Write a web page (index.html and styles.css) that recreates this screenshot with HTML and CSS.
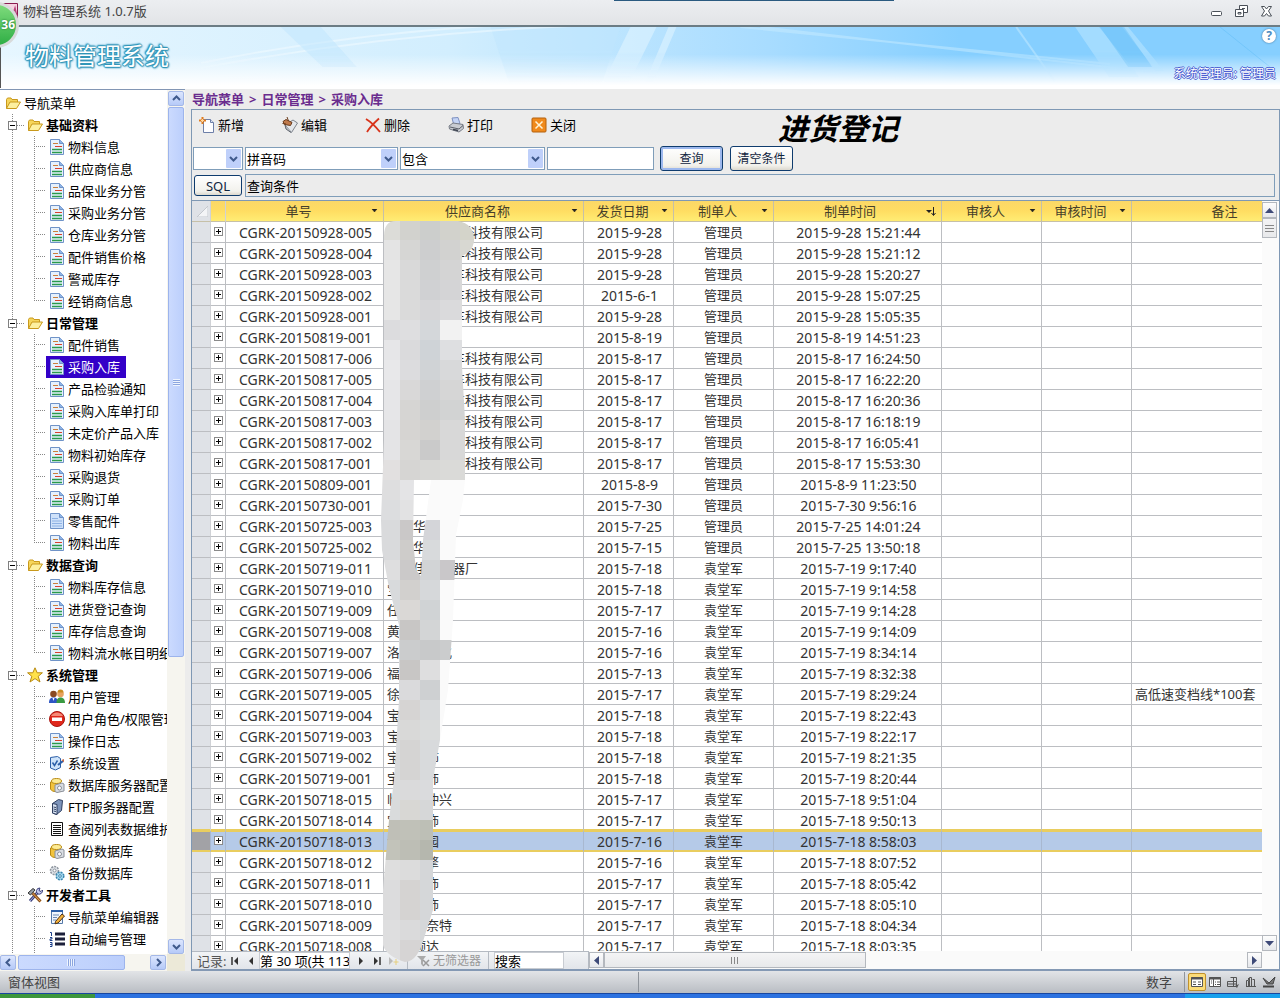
FILE: index.html
```html
<!DOCTYPE html>
<html lang="zh-CN">
<head>
<meta charset="utf-8">
<title>物料管理系统 1.0.7版</title>
<link rel="stylesheet" href="styles.css">
</head>
<body>
<svg class="sprite" aria-hidden="true">
  <symbol id="i-folder" viewBox="0 0 16 16"><path d="M1.500 13.500V4.500l1-1.500h3.500l1 1.500h5.500V7" fill="#f6d65c" stroke="#c9991c"/><path d="M1.500 13.500L5 7h10.500l-4 6.500z" fill="#fdf0a0" stroke="#c9991c"/></symbol>
  <symbol id="i-doc" viewBox="0 0 16 16"><path d="M1.500.5h9l4 4v11h-13z" fill="#e6f1fc" stroke="#6f93c8"/><path d="M10.500.5v4h4" fill="#8fb4e6" stroke="#6f93c8"/><path d="M4 4.500h5" stroke="#c9803c"/><path d="M6 7.500h7" stroke="#d8402c"/><path d="M3 10.500h10M3 13.500h10" stroke="#2a9a4c" stroke-width="1.300"/></symbol>
  <symbol id="i-docblue" viewBox="0 0 16 16"><path d="M1.500.5h9l4 4v11h-13z" fill="#cfe2fa" stroke="#6f93c8"/><path d="M10.500.5v4h4" fill="#8fb4e6" stroke="#6f93c8"/><path d="M3 5.500h6M3 8h10M3 10.500h10M3 13h10" stroke="#8eb2e4"/></symbol>
  <symbol id="i-star" viewBox="0 0 16 16"><path d="M8 .8l2.200 5h5.200l-4.200 3.500 1.800 5.700L8 11.600 3 15l1.800-5.700L.6 5.800h5.200z" fill="#ffe24a" stroke="#b98a12"/></symbol>
  <symbol id="i-users" viewBox="0 0 16 16"><circle cx="4.500" cy="5" r="3.300" fill="#8a4a22"/><path d="M0 14c0-4 1.500-5.500 4.500-5.500S9 10 9 14z" fill="#2e55c4"/><circle cx="11.500" cy="5" r="3.300" fill="#e7a35e"/><path d="M8.500 3.500a3 3 0 0 1 6 0z" fill="#c98c1f"/><path d="M7.500 14c0-4 1.500-5.500 4-5.500S16 10 16 14z" fill="#3a9a42"/><path d="M3.500 9l1 3 1-3z" fill="#fff"/></symbol>
  <symbol id="i-stop" viewBox="0 0 16 16"><circle cx="8" cy="8" r="7.500" fill="#e0281c" stroke="#a81410"/><path d="M2 5a7 7 0 0 1 12 0" fill="#f58a78"/><rect x="3" y="6.500" width="10" height="3.500" fill="#fff"/></symbol>
  <symbol id="i-setting" viewBox="0 0 16 16"><path d="M1.500 2.500l7-1 3 2v9l-5 2.500-5-2z" fill="#cfe4fa" stroke="#2c5fa8"/><path d="M3.500 7.500l2 3 3-5" fill="none" stroke="#2c5fa8" stroke-width="1.500"/><path d="M9 10l5-4" stroke="#2c5fa8" stroke-width="2"/><path d="M12.500 5l2.500-1v3.500z" fill="#c46a4a"/></symbol>
  <symbol id="i-db" viewBox="0 0 16 16"><path d="M1.500 5v7c1 2 3 2.500 5 2.500h5V4z" fill="#f2c33c" stroke="#b98a12"/><ellipse cx="7.500" cy="4" rx="5" ry="2.500" fill="#fdeb94" stroke="#b98a12"/><path d="M6 8l7-2 2 1v7l-7 1.500-2-1z" fill="#d9dde3" stroke="#8b9099"/><circle cx="10.500" cy="11" r="2" fill="#fff" stroke="#8b9099"/></symbol>
  <symbol id="i-server" viewBox="0 0 16 16"><path d="M3.500 4.500l6-4 4 1-1 10-5 4-4-1.500z" fill="#7d94bb" stroke="#2f3f60"/><path d="M3.500 4.500l4.500 1v10l-4.500-1.500z" fill="#dbe6f6" stroke="#2f3f60"/><path d="M4.500 8l2.500.5M4.500 10l2.500.5M4.500 12l2.500.5" stroke="#2f3f60"/></symbol>
  <symbol id="i-list" viewBox="0 0 16 16"><path d="M2.500 1.500h11v13h-11z" fill="#fff" stroke="#111"/><path d="M4 4.500h8M4 6.500h8M4 8.500h8M4 10.500h8M4 12.500h8" stroke="#111"/></symbol>
  <symbol id="i-gears" viewBox="0 0 16 16"><circle cx="5.500" cy="5.500" r="4" fill="#dfe3e8" stroke="#8e959e" stroke-dasharray="2 1" stroke-width="1.500"/><circle cx="5.500" cy="5.500" r="1.500" fill="#fff" stroke="#8e959e"/><circle cx="11" cy="11" r="3.800" fill="#a6d8f0" stroke="#3a86ae" stroke-dasharray="2 1" stroke-width="1.500"/><circle cx="11" cy="11" r="1.300" fill="#fff" stroke="#3a86ae"/></symbol>
  <symbol id="i-tools" viewBox="0 0 16 16"><path d="M3 14L11 5" stroke="#3b3f7a" stroke-width="3"/><path d="M3 14L11 5" stroke="#a9b4e6"/><path d="M10 6a3 3 0 0 1 1-4.500l2-.5-1 2.500 2 1 1.500-1.500A3.500 3.500 0 0 1 11 7z" fill="#c7cdf2" stroke="#3b3f7a"/><path d="M13.500 14.500L5.500 6" stroke="#8a4f1c" stroke-width="3"/><path d="M13.500 14.500L5.500 6" stroke="#e6a65a"/><path d="M1 6l5-4.500 2 1.500-4.500 5z" fill="#9aa0a8" stroke="#333"/></symbol>
  <symbol id="i-note" viewBox="0 0 16 16"><path d="M2.500 1.500h11v13h-11z" fill="#f0f6fd" stroke="#5478a8"/><path d="M2 2h12" stroke="#2c5fa8" stroke-width="2"/><path d="M4 6h6M4 8.500h4M4 11h3" stroke="#6b89b5"/><path d="M6.500 12.500L13 5l2.500 2L9 14l-3 .8z" fill="#f4b23c" stroke="#503010"/></symbol>
  <symbol id="i-numlist" viewBox="0 0 16 16"><path d="M6 3h10M6 8h10M6 13h10" stroke="#1b1f3a" stroke-width="3"/><path d="M1 1.500h1.500V5M1 6.500h2v1.500H1v1.500h2.500M1 11.500h2v4H1m0-2h2" fill="none" stroke="#1b3f8a"/></symbol>
  <symbol id="i-new" viewBox="0 0 16 16"><path d="M4.500 2.500h7l3 3v10h-10z" fill="#fdfdff" stroke="#6d7fa8"/><path d="M11.500 2.500v3h3" fill="#dfe6f5" stroke="#6d7fa8"/><path d="M3.500 0v7M0 3.500h7" stroke="#e07a1c" stroke-width="2"/><path d="M3.500 2v3M2 3.500h3" stroke="#ffd9a0"/></symbol>
  <symbol id="i-edit" viewBox="0 0 16 16"><path d="M3 8l8-5 4.500 3-6 9.500z" fill="#e3e6ea" stroke="#7d838c"/><path d="M3 8l1 4 5 3.500" fill="#b9bec6" stroke="#60656e"/><path d="M1 4.500l3-2 6 3-1.500 3-6-1z" fill="#c07a4c" stroke="#6b3d1e"/><path d="M5 0l1.500 4M.5 6.500l3.500.5" stroke="#6b3d1e"/></symbol>
  <symbol id="i-del" viewBox="0 0 16 16"><path d="M1 2c5 3 10 8 14 13M14 1.500C9 6 5 10 2 15" fill="none" stroke="#d8331a" stroke-width="1.800"/></symbol>
  <symbol id="i-print" viewBox="0 0 16 16"><path d="M4 1l6-.5 2 6-6 2z" fill="#c4d4f6" stroke="#7e90c0"/><path d="M1 9l4-3 10 1.500.5 4L11 15 1.500 12z" fill="#c9ccd2" stroke="#777c86"/><path d="M2 10l9 2 4-3.500" fill="none" stroke="#5a5f69"/><path d="M5 12.500l5 1" stroke="#3f4450" stroke-width="1.500"/></symbol>
  <symbol id="i-close" viewBox="0 0 16 16"><rect x="1" y="1" width="14" height="14" rx="1" fill="#f08a1c" stroke="#b4600c"/><path d="M4.500 4.500l7 7M11.500 4.500l-7 7" stroke="#fff4d8" stroke-width="1.500"/></symbol>
  <symbol id="i-up" viewBox="0 0 9 9"><path d="M1 6l3.500-3.500L8 6" fill="none" stroke="#3f5a8c" stroke-width="2"/></symbol>
  <symbol id="i-down" viewBox="0 0 9 9"><path d="M1 3l3.500 3.500L8 3" fill="none" stroke="#3f5a8c" stroke-width="2"/></symbol>
  <symbol id="i-left" viewBox="0 0 9 9"><path d="M6 1L2.500 4.500 6 8" fill="none" stroke="#3f5a8c" stroke-width="2"/></symbol>
  <symbol id="i-right" viewBox="0 0 9 9"><path d="M3 1l3.500 3.500L3 8" fill="none" stroke="#3f5a8c" stroke-width="2"/></symbol>
</svg>

<div class="app">
  <header class="titlebar">
    <span class="app-name">物料管理系统 1.0.7版</span>
    <span class="top-strip"></span>
    <div class="window-buttons">
      <button type="button" aria-label="最小化"><svg width="13" height="13"><rect x="1.500" y="6.500" width="10" height="4" rx="1" fill="#fff" stroke="#4a5058"/></svg></button>
      <button type="button" aria-label="还原"><svg width="13" height="13"><path d="M4.500 .5h8v7h-8z" fill="#fff" stroke="#4a5058"/><path d="M7 3.500h3" stroke="#4a5058"/><path d="M.5 4.500h8v7h-8z" fill="#fff" stroke="#4a5058"/><path d="M3 7.500h3v1.500h-3z" fill="none" stroke="#4a5058"/></svg></button>
      <button type="button" aria-label="关闭"><svg width="13" height="13"><path d="M1.500 1.500h3l2 2.500 2-2.500h3L8.500 6l3 5h-3l-2-2.500-2 2.500h-3l3-5z" fill="#fff" stroke="#4a5058"/></svg></button>
    </div>
  </header>
  <svg class="app-icon" width="20" height="20" aria-hidden="true"><path d="M.5.5h17v17H.5z" fill="#f6d3e2" stroke="#8a1c50"/><path d="M12 14l3-9 2 9" fill="none" stroke="#b8477c" stroke-width="1.500"/></svg>
  <div class="badge">36</div>

  <section class="banner">
    <svg class="streaks" viewBox="0 0 1280 61" preserveAspectRatio="none" aria-hidden="true">
      <path d="M490 0h130l-20 61h-90z" fill="#bfe6fd" opacity=".5"/>
      <path d="M630 0h26l-30 61h-26zM668 0h8l-26 61h-8z" fill="#e8f7ff" opacity=".5"/>
      <path d="M200 36Q380 0 560 -4M200 41Q400 4 600 -2" fill="none" stroke="#f4fbff" stroke-width="2" opacity=".5"/>
      <path d="M740 0L1110 37M760 0L1160 46" stroke="#c8ecff" stroke-width="2" opacity=".5"/>
      <path d="M1016 0L1055 55" stroke="#c8ecff" stroke-width="2" opacity=".5"/>
      <path d="M1075 0h24l40 50h-30zM1122 0h6l36 44h-8z" fill="#b8e4ff" opacity=".6"/>
      <path d="M1100 0h24l28 40h-24z" fill="#6bc2f8" opacity=".5"/>
      <path d="M1220 0L1270 40" stroke="#6bc2f8" opacity=".7"/>
      <path d="M280 0h40l36 40h-34z" fill="#bfe6fd" opacity=".5"/>
    </svg>
    <h1>物料管理系统</h1>
    <div class="banner-side">
      <button type="button" class="help" aria-label="帮助">?</button>
      <span class="who">系统管理员: 管理员</span>
    </div>
  </section>

  <div class="work">
    <aside class="sidebar">
      <ul class="tree" id="tree"></ul>
      <div class="xp-v">
        <button type="button" aria-label="向上"><svg width="9" height="9"><use href="#i-up"/></svg></button>
        <span class="thumb"><i></i></span>
        <button type="button" aria-label="向下"><svg width="9" height="9"><use href="#i-down"/></svg></button>
      </div>
      <div class="xp-h">
        <button type="button" aria-label="向左"><svg width="9" height="9"><use href="#i-left"/></svg></button>
        <span class="thumb"><i></i></span>
        <button type="button" aria-label="向右"><svg width="9" height="9"><use href="#i-right"/></svg></button>
      </div>
      <div class="corner"></div>
    </aside>

    <main class="content">
      <nav class="crumbs"><span>导航菜单</span><span>&gt;</span><span>日常管理</span><span>&gt;</span><span>采购入库</span></nav>
      <div class="form">
        <div class="toolbar">
          <button type="button"><svg width="16" height="16"><use href="#i-new"/></svg>新增</button>
          <button type="button"><svg width="16" height="16"><use href="#i-edit"/></svg>编辑</button>
          <button type="button"><svg width="16" height="16"><use href="#i-del"/></svg>删除</button>
          <button type="button"><svg width="16" height="16"><use href="#i-print"/></svg>打印</button>
          <button type="button"><svg width="16" height="16"><use href="#i-close"/></svg>关闭</button>
          <h2>进货登记</h2>
        </div>
        <div class="filters">
          <select class="s-logic" aria-label="逻辑"><option></option></select>
          <select class="s-field" aria-label="字段"><option>拼音码</option></select>
          <select class="s-op" aria-label="条件"><option>包含</option></select>
          <input class="s-value" type="text" aria-label="值">
          <button type="button" class="btn default">查询</button>
          <button type="button" class="btn">清空条件</button>
        </div>
        <div class="sqlrow">
          <button type="button" class="btn sql">SQL</button>
          <input type="text" value="查询条件" aria-label="查询条件">
        </div>
        <div class="grid">
          <div class="table-wrap">
            <table>
              <colgroup><col class="c-sel"><col class="c-exp"><col class="c-no"><col class="c-sup"><col class="c-date"><col class="c-by"><col class="c-time"><col class="c-aud"><col class="c-audt"><col class="c-memo"></colgroup>
              <thead><tr id="head"></tr></thead>
              <tbody id="rows"></tbody>
            </table>
          </div>
          <div class="ac-v">
            <button type="button" aria-label="上"><svg width="9" height="5"><path d="M0 5L4.500 0 9 5z" fill="#3e4a78"/></svg></button>
            <span class="thumb"><i></i></span>
            <button type="button" aria-label="下"><svg width="9" height="5"><path d="M0 0h9L4.500 5z" fill="#3e4a78"/></svg></button>
          </div>
          <div class="foot">
            <div class="recnav">
              <span class="rec-label">记录:</span>
              <button type="button" aria-label="第一条"><svg width="8" height="8"><path d="M1 0v8" stroke="#333" stroke-width="1.500"/><path d="M7 0v8L3 4z" fill="#333"/></svg></button>
              <button type="button" aria-label="上一条"><svg width="8" height="8"><path d="M6 0v8L2 4z" fill="#333"/></svg></button>
              <input class="rec-pos" type="text" value="第 30 项(共 113" aria-label="当前记录">
              <button type="button" aria-label="下一条"><svg width="8" height="8"><path d="M2 0v8l4-4z" fill="#333"/></svg></button>
              <button type="button" aria-label="最后一条"><svg width="8" height="8"><path d="M1 0v8l4-4z" fill="#333"/><path d="M7 0v8" stroke="#333" stroke-width="1.500"/></svg></button>
              <button type="button" aria-label="新记录"><svg width="10" height="8"><path d="M0 0v8l4-4z" fill="#bbb"/><path d="M7 2v6M4.500 5h5" stroke="#e6cf7c"/></svg></button>
              <button type="button" class="nofilter" disabled><svg width="14" height="12"><path d="M1 1h9L7 5v6L5 9V5z" fill="#aaa"/><path d="M7 5l6 6M13 5l-6 6" stroke="#999" stroke-width="1.500"/></svg>无筛选器</button>
              <input class="rec-search" type="text" value="搜索" aria-label="搜索">
            </div>
            <div class="ac-h">
              <button type="button" aria-label="左"><svg width="5" height="9"><path d="M5 0v9L0 4.500z" fill="#3e4a78"/></svg></button>
              <span class="thumb"><i></i></span>
              <button type="button" aria-label="右"><svg width="5" height="9"><path d="M0 0v9l5-4.500z" fill="#3e4a78"/></svg></button>
            </div>
          </div>
          <svg class="mosaic" id="mosaic" width="100" height="745" viewBox="380 220 100 745" aria-hidden="true">
            <clipPath id="blob"><path clip-rule="evenodd" d="M384 236Q384 221 396 221H458Q475 224 474 242Q472 252 462 256V366L465 420V480L463 500L456 535L453 620L448 690L440 740L433 780V910L425 935Q418 962 405 962Q386 956 383 945V890L389 820L394 780L399 700V625L389 588L382 550L381 520L384 440ZM414 480L413 540L416 570L421 576L423 540L427 510L431 480Z"/></clipPath>
            <g id="blocks" clip-path="url(#blob)"></g>
          </svg>
        </div>
      </div>
    </main>
  </div>

  <footer class="statusbar">
    <span class="view-name">窗体视图</span>
    <span class="num-lock">数字</span>
    <div class="views">
      <button type="button" class="on" aria-label="窗体视图"><svg width="14" height="14"><path d="M1.500 2.500h11v9h-11z" fill="#fff" stroke="#555"/><path d="M1 3.500h12" stroke="#555" stroke-width="2"/><path d="M3 7h3M3 9.500h3M8 7h3M8 9.500h3" stroke="#555"/></svg></button>
      <button type="button" aria-label="数据表视图"><svg width="14" height="14"><path d="M1.500 2.500h11v9h-11zM5.500 2v10" fill="#fff" stroke="#555"/><path d="M1 3.500h12" stroke="#555" stroke-width="2"/><path d="M3 6h1M3 8h1M7 7h1M7 9.500h1M9 7h3M9 9.500h3" stroke="#555"/></svg></button>
      <button type="button" aria-label="透视表视图"><svg width="14" height="14"><path d="M1.500 6.500h9v5h-9zM4.500 2.500h6v9M7.500 2v10M1.500 9h9" fill="none" stroke="#555"/><path d="M9 11l4-2-2 4z" fill="#555"/></svg></button>
      <button type="button" aria-label="透视图视图"><svg width="14" height="14"><path d="M2.500 5.500h2v6h-2zM5.500 2.500h2v9h-2zM8.500 4.500h2v7M2 11.500h10M4.500 3v2" fill="none" stroke="#555"/></svg></button>
      <button type="button" aria-label="设计视图"><svg width="14" height="14"><path d="M1 3l4 6h6L13 2 7 8z" fill="#777" stroke="#444"/><path d="M1 11.500h11" stroke="#444" stroke-width="2"/></svg></button>
    </div>
  </footer>
  <div class="taskbar"><span class="start"></span><span class="tasks"></span><span class="tray"></span></div>
</div>
<script src="app.js"></script>
</body>
</html>
```
FILE: styles.css
```css
* { box-sizing: border-box; }
body {
  margin: 0;
  font: 13px/20px "Noto Sans", "Noto Sans CJK SC", sans-serif;
  color: #111;
  background: #ececec;
}
button, input, select { font: inherit; color: inherit; margin: 0; padding: 0; }
button { background: none; border: 0; }
h1, h2, ul { margin: 0; padding: 0; }
svg { display: block; flex: none; }
.sprite { position: absolute; width: 0; height: 0; }
.app { position: relative; display: flex; flex-direction: column; height: 100vh; overflow: hidden; }

/* title bar */
.titlebar {
  flex: none; display: flex; justify-content: space-between; height: 27px; padding: 0 7px 0 23px;
  background: linear-gradient(#eceef1, #e2e4e7);
  border-bottom: 2px solid #6c7c84;
  color: #444; line-height: 22px;
}
.top-strip { width: 280px; height: 1px; margin-left: 152px; background: #2a5a80; }
.window-buttons { display: flex; gap: 12px; align-items: center; height: 22px; }
.app-icon { position: absolute; left: 0; top: 3px; }
.badge {
  position: absolute; z-index: 2; left: -27px; top: 2px; width: 46px; height: 46px;
  border: 3px solid #d8dadb; border-radius: 50%;
  background: linear-gradient(#7edb7c, #2fae45);
  color: #fff; font-weight: bold; font-size: 12px; line-height: 40px; text-align: right; padding-right: 1px;
  text-shadow: 0 0 2px #186a28;
}

/* banner */
.banner {
  position: relative; flex: none; display: flex; justify-content: space-between; height: 61px; padding-left: 24px;
  background: linear-gradient(transparent 45%, #fff 96%), linear-gradient(90deg, #e6f6ff, #d2eefe 35%, #a8dcff 60%, #86cfff 75%);
  border-left: 1px solid #555;
}
.streaks { position: absolute; inset: 0; width: 100%; height: 100%; -webkit-mask-image: linear-gradient(#000 40%, transparent 90%); mask-image: linear-gradient(#000 40%, transparent 90%); }
.banner h1 {
  position: relative; font-size: 24px; font-weight: normal; line-height: 58px; color: #fff;
  text-shadow: 1px 0 1px #2f94b8, -1px 0 1px #2f94b8, 0 1px 1px #2f94b8, 0 -1px 1px #2f94b8, 1px 1px 2px #2f94b8, -1px -1px 2px #2f94b8;
}
.banner-side { position: relative; display: flex; flex-direction: column; align-items: flex-end; justify-content: space-between; padding: 2px 4px 4px 0; }
.help { width: 14px; height: 14px; border-radius: 50%; background: #fff; box-shadow: 0 0 2px #35658c; color: #4d8bc0; font-weight: bold; font-size: 12px; line-height: 14px; }
.who { font-size: 12px; color: #fff; text-shadow: 1px 0 #4a5cd0, -1px 0 #4a5cd0, 0 1px #4a5cd0, 0 -1px #4a5cd0; }

/* work area */
.work { flex: 1; min-height: 0; display: flex; border-top: 1px solid #fff; }
.sidebar {
  flex: none; width: 185px; display: grid; grid-template: minmax(0, 1fr) 17px / minmax(0, 1fr) 18px;
  background: #fff; border-top: 1px solid #8296b4;
}
.tree { list-style: none; padding-top: 2px; overflow: hidden; color: #000; white-space: nowrap; }
.tree li {
  display: flex; align-items: center; height: 22px;
  background: linear-gradient(#888 50%, transparent 50%) 12px 0 / 1px 2px repeat-y;
}
.tree li > * { flex: none; }
.tree .root { background: none; padding-left: 5px; }
.tree a { display: flex; align-items: center; gap: 3px; height: 22px; color: inherit; text-decoration: none; }
.tree .group a { font-weight: bold; padding-left: 2px; }
.toggle { width: 9px; height: 9px; margin-left: 8px; border: 1px solid #808080; background: linear-gradient(#000, #000) center / 5px 1px no-repeat #fff; }
.dash { width: 8px; height: 1px; background: linear-gradient(90deg, #888 50%, transparent 50%) 0 0 / 2px 1px; }
.branch {
  width: 12px; height: 22px; margin-left: 34px;
  background: linear-gradient(#888 50%, transparent 50%) 0 0 / 1px 2px repeat-y, linear-gradient(90deg, #888 50%, transparent 50%) 0 10px / 2px 1px repeat-x;
}
.branch.last { background: linear-gradient(90deg, #888 50%, transparent 50%) 0 10px / 2px 1px repeat-x; }
.branch.last::before { content: ""; display: block; width: 1px; height: 10px; background: linear-gradient(#888 50%, transparent 50%) 0 0 / 1px 2px; }
.item a { padding: 0 6px 0 3px; }
.item a.current { background: #3300c8; color: #fff; }

.xp-v, .xp-h { display: flex; background: #f6f5ef; gap: 1px; }
.xp-v { flex-direction: column; padding: 1px 1px 0; }
.xp-h { padding: 1px 1px 1px 0; justify-content: space-between; }
.xp-v button, .xp-h button { display: grid; place-items: center; width: 16px; height: 15px; flex: none; background: linear-gradient(#dce6fe, #b6caf8); border: 1px solid #a4b8e8; border-radius: 2px; }
.xp-v .thumb, .xp-h .thumb { display: grid; place-items: center; border: 1px solid #9db4ec; border-radius: 2px; background: linear-gradient(90deg, #cbdafe, #bccffc); }
.xp-v .thumb { height: 550px; }
.xp-v button:last-child { margin-top: auto; }
.xp-h .thumb { width: 107px; margin-right: 24px; }
.xp-v i { width: 7px; height: 7px; background: repeating-linear-gradient(#eef4fe 0 1px, #8ca6e0 1px 2px); }
.xp-h i { width: 8px; height: 7px; background: repeating-linear-gradient(90deg, #eef4fe 0 1px, #8ca6e0 1px 2px); }
.corner { background: #ece9d8; }

.content { flex: 1; min-width: 0; display: flex; flex-direction: column; padding-left: 6px; }
.crumbs { flex: none; display: flex; gap: 5px; height: 20px; padding-left: 1px; color: #6a2c8e; font-weight: bold; }
.form { flex: 1; min-height: 0; display: flex; flex-direction: column; border: 1px solid #7f98b4; border-bottom: 2px solid #8499b4; }
.toolbar { flex: none; display: flex; height: 36px; padding-left: 7px; color: #000; }
.toolbar button { display: flex; align-items: center; gap: 3px; width: 83px; height: 30px; }
.toolbar h2 { margin-left: 164px; font: italic bold 30px/34px "Noto Sans CJK SC", sans-serif; }
.filters { flex: none; display: flex; align-items: center; gap: 2px; height: 25px; padding-left: 1px; }
.filters select, .s-value { height: 23px; border: 1px solid #7f9db9; border-radius: 0; background: #fff; color: #000; padding-left: 1px; }
.filters select {
  appearance: none;
  background: url("data:image/svg+xml,%3Csvg xmlns='http://www.w3.org/2000/svg' width='15' height='19'%3E%3Crect width='15' height='19' rx='1' fill='%23bfd0fa'/%3E%3Cpath d='M4 8l3.500 3.500L11 8' fill='none' stroke='%233f5a8c' stroke-width='2'/%3E%3C/svg%3E") right 1px center no-repeat #fff;
}
.s-logic { width: 50px; }
.s-field { width: 153px; }
.s-op { width: 145px; }
.s-value { width: 107px; margin-right: 4px; }
.btn {
  width: 63px; height: 25px; font-size: 12px; color: #10243e;
  border: 1px solid #0f3c6e; border-radius: 3px; background: linear-gradient(#fff, #f2f1ec 80%, #dcd8ce);
}
.btn + .btn { margin-left: 5px; }
.btn.default { box-shadow: inset 0 0 0 2px #9db8ee; }
.sqlrow { flex: none; display: flex; align-items: center; gap: 3px; height: 29px; padding: 0 4px 0 2px; }
.btn.sql { width: 48px; height: 21px; line-height: 18px; font-size: 13px; }
.sqlrow input { flex: 1; height: 23px; border: 1px solid #7f9db9; background: #ececec; color: #000; padding-left: 1px; }

/* data sheet */
.grid {
  position: relative; flex: 1; min-height: 0;
  display: grid; grid-template: minmax(0, 1fr) 18px / minmax(0, 1fr) 17px;
  border-top: 1px solid #7f98b4; background: #fafafa;
}
.table-wrap { overflow: hidden; background: #fff; }
table { table-layout: fixed; width: 1131px; border-spacing: 0; color: #333; }
.c-sel { width: 19px; }
.c-exp { width: 15px; }
.c-no { width: 158px; }
.c-sup { width: 200px; }
.c-date, .c-audt { width: 90px; }
.c-by, .c-aud { width: 100px; }
.c-time { width: 168px; }
.c-memo { width: 191px; }
th, td { height: 21px; padding: 0; border: solid #bcbec2; border-width: 0 1px 1px 0; text-align: center; white-space: nowrap; line-height: 19px; overflow: hidden; }
th { font-weight: normal; background: linear-gradient(#fbd867, #ffdd62 50%, #ffec74); color: #463f2a; border-color: #c6c0a8; }
th .cap { display: flex; align-items: center; padding-right: 5px; }
th .cap span { flex: 1; }
th:first-child { background: #dfe2e7; }
th:first-child svg { margin-left: 4px; }
th:nth-child(-n+2), td:first-child { border-right-color: #d0d2d6; }
td:first-child { background: #dfe2e7; }
td.code { font-size: 14px; padding-left: 2px; }
td.text { text-align: left; padding-left: 3px; }
.plus { display: block; width: 9px; height: 9px; margin: 0 0 2px 3px; border: 1px solid #8a8a8a; background: linear-gradient(#000, #000) center / 5px 1px no-repeat, linear-gradient(#000, #000) center / 1px 5px no-repeat, #fff; }
tr.sel td { background: #b5cae8; border-bottom-color: #e9cd5f; border-right-color: #a8b8d0; box-shadow: inset 0 1px #e9cd5f, inset 0 -1px #e9cd5f; }
tr:has(+ .sel) td { border-bottom-color: #e9cd5f; box-shadow: inset 0 -1px #e9cd5f; }
tr.sel td:first-child { background: #a2a2a6; }

.ac-v { display: flex; flex-direction: column; padding: 1px 1px 0 0; background: #fbfbfb; }
.ac-v button, .ac-h button { display: grid; place-items: center; width: 15px; height: 16px; flex: none; background: linear-gradient(#fdfdfd, #e6e8ec); border: 1px solid #b4b8be; }
.ac-v .thumb, .ac-h .thumb { display: grid; place-items: center; background: linear-gradient(#f4f4f5, #e8e9eb); border: 1px solid #b4b8be; }
.ac-v button, .ac-v .thumb { width: 15px; }
.ac-v .thumb { height: 20px; }
.ac-v button:last-child { margin-top: auto; }
.ac-v i { width: 9px; height: 7px; background: repeating-linear-gradient(#888 0 1px, transparent 1px 3px); }
.foot { display: flex; grid-column: 1 / 3; min-width: 0; }
.recnav { flex: none; display: flex; align-items: center; width: 397px; padding-left: 5px; border: solid #b4bac2; border-width: 1px 1px 0 0; background: linear-gradient(#f2f4f6, #e2e5ea); color: #555; }
.recnav button { flex: none; display: flex; align-items: center; }
.rec-label { width: 34px; }
.recnav input { height: 17px; border: 1px solid #c8ccd2; background: #fff; color: #000; line-height: 15px; }
.rec-label + button { margin-right: 8px; }
.rec-pos { width: 91px; margin: 0 7px 0 4px; }
.rec-pos + button + button { margin: 0 8px; }
.recnav .nofilter { gap: 3px; height: 17px; margin-left: 8px; padding: 0 7px 0 8px; border: solid #b4bac2; border-width: 0 1px; color: #999; font-size: 12px; }
.rec-search { width: 70px; margin-left: 5px; }
.ac-h { flex: 1; display: flex; padding: 1px 17px 1px 0; }
.ac-h .thumb { width: 262px; }
.ac-h button:last-child { margin-left: auto; }
.ac-h i { width: 8px; height: 7px; background: repeating-linear-gradient(90deg, #888 0 1px, transparent 1px 3px); }
.mosaic { position: absolute; left: 188px; top: 19px; }

/* status bar */
.statusbar { flex: none; display: flex; align-items: center; height: 22px; padding: 0 2px 0 8px; color: #444; background: linear-gradient(#e2e4e7, #b9bdc3); }
.view-name { flex: none; width: 50%; margin-right: auto; background: linear-gradient(90deg, transparent 630px, #8f949b 630px 631px, transparent 631px); }
.num-lock { padding-right: 12px; margin-right: 3px; border-right: 1px solid #8f949b; }
.views { display: flex; }
.views button { width: 18px; height: 18px; display: grid; place-items: center; }
.views .on { background: #fbdc78; border: 1px solid #c0912c; border-radius: 2px; }
.taskbar { flex: none; display: flex; height: 5px; border-top: 1px solid #1846a0; }
.start { width: 95px; background: #3d963c; }
.tasks { flex: 1; background: #2c72e0; }
.tray { width: 95px; background: #18a0ec; }
```
FILE: app.js
```js
const icon = (name, size = 16) => `<svg width="${size}" height="${size}"><use href="#i-${name}"/></svg>`;

const tree = [
  ['基础资料', 'folder', ['物料信息', '供应商信息', '品保业务分管', '采购业务分管', '仓库业务分管', '配件销售价格', '警戒库存', '经销商信息']],
  ['日常管理', 'folder', ['配件销售', '采购入库', '产品检验通知', '采购入库单打印', '未定价产品入库', '物料初始库存', '采购退货', '采购订单', ['零售配件', 'docblue'], '物料出库']],
  ['数据查询', 'folder', ['物料库存信息', '进货登记查询', '库存信息查询', '物料流水帐目明细']],
  ['系统管理', 'star', [['用户管理', 'users'], ['用户角色/权限管理', 'stop'], '操作日志', ['系统设置', 'setting'], ['数据库服务器配置', 'db'], ['FTP服务器配置', 'server'], ['查阅列表数据维护', 'list'], ['备份数据库', 'db'], ['备份数据库', 'gears']]],
  ['开发者工具', 'tools', [['导航菜单编辑器', 'note'], ['自动编号管理', 'numlist'], ['', 'db']]]
];

let html = `<li class="root"><a href="#">${icon('folder')}<span>导航菜单</span></a></li>`;
for (const [name, groupIcon, children] of tree) {
  html += `<li class="group"><button type="button" class="toggle" aria-label="折叠${name}"></button><span class="dash"></span><a href="#">${icon(groupIcon)}${name}</a></li>`;
  children.forEach((child, i) => {
    const [label, pic] = Array.isArray(child) ? child : [child, 'doc'];
    const last = i === children.length - 1 ? ' last' : '';
    const current = label === '采购入库' ? ' class="current"' : '';
    html += `<li class="item"><span class="branch${last}"></span><a href="#"${current}>${icon(pic)}<span>${label}</span></a></li>`;
  });
}
document.getElementById('tree').innerHTML = html;

const arrow = '<svg width="7" height="4"><path d="M1 0h5L3.500 3z" fill="#222" stroke="#222" stroke-width=".5"/></svg>';
const sorted = '<svg width="10" height="9"><path d="M0 3h6L3 6z" fill="#222"/><path d="M7.500 0v8M5.500 6l2 2.500 2-2.500" fill="none" stroke="#222"/></svg>';
const heads = ['单号', '供应商名称', '发货日期', '制单人', '制单时间', '审核人', '审核时间', '备注'];
document.getElementById('head').innerHTML =
  '<th><svg width="12" height="12"><path d="M12 1v11H1z" fill="#f4f5f7" stroke="#c4c8ce"/></svg></th><th></th>' +
  heads.map(h => `<th><div class="cap"><span>${h}</span>${h === '备注' ? '' : h === '制单时间' ? sorted : arrow}</div></th>`).join('');

const co = '　　　　　车科技有限公司';
const admin = '管理员', yuan = '袁堂军';
const rows = [
  ['0928-005', co, '9-28', admin, '9-28 15:21:44'],
  ['0928-004', co, '9-28', admin, '9-28 15:21:12'],
  ['0928-003', co, '9-28', admin, '9-28 15:20:27'],
  ['0928-002', co, '6-1', admin, '9-28 15:07:25'],
  ['0928-001', co, '9-28', admin, '9-28 15:05:35'],
  ['0819-001', '', '8-19', admin, '8-19 14:51:23'],
  ['0817-006', co, '8-17', admin, '8-17 16:24:50'],
  ['0817-005', co, '8-17', admin, '8-17 16:22:20'],
  ['0817-004', co, '8-17', admin, '8-17 16:20:36'],
  ['0817-003', co, '8-17', admin, '8-17 16:18:19'],
  ['0817-002', co, '8-17', admin, '8-17 16:05:41'],
  ['0817-001', co, '8-17', admin, '8-17 15:53:30'],
  ['0809-001', '', '8-9', admin, '8-9 11:23:50'],
  ['0730-001', '', '7-30', admin, '7-30 9:56:16'],
  ['0725-003', '　　华', '7-25', admin, '7-25 14:01:24'],
  ['0725-002', '　　华', '7-15', admin, '7-25 13:50:18'],
  ['0719-011', '　　佳　　器厂', '7-18', yuan, '7-19 9:17:40'],
  ['0719-010', '宝', '7-18', yuan, '7-19 9:14:58'],
  ['0719-009', '任', '7-17', yuan, '7-19 9:14:28'],
  ['0719-008', '黄', '7-16', yuan, '7-19 9:14:09'],
  ['0719-007', '洛　　　化', '7-16', yuan, '7-19 8:34:14'],
  ['0719-006', '福', '7-13', yuan, '7-19 8:32:38'],
  ['0719-005', '徐', '7-17', yuan, '7-19 8:29:24', '高低速变档线*100套'],
  ['0719-004', '宝', '7-18', yuan, '7-19 8:22:43'],
  ['0719-003', '宝', '7-18', yuan, '7-19 8:22:17'],
  ['0719-002', '宝　　饰', '7-18', yuan, '7-19 8:21:35'],
  ['0719-001', '宝　　饰', '7-18', yuan, '7-19 8:20:44'],
  ['0718-015', '临　　仲兴', '7-17', yuan, '7-18 9:51:04'],
  ['0718-014', '宝　　饰', '7-17', yuan, '7-18 9:50:13'],
  ['0718-013', '洛　　园', '7-16', yuan, '7-18 8:58:03'],
  ['0718-012', '　　　擎', '7-16', yuan, '7-18 8:07:52'],
  ['0718-011', '　　　饰', '7-17', yuan, '7-18 8:05:42'],
  ['0718-010', '　　　饰', '7-17', yuan, '7-18 8:05:10'],
  ['0718-009', '　　　奈特', '7-17', yuan, '7-18 8:04:34'],
  ['0718-008', '　　颂达', '7-17', yuan, '7-18 8:03:35']
];
document.getElementById('rows').innerHTML = rows.map(([no, supplier, date, by, time, memo = '']) => `
  <tr${no === '0718-013' ? ' class="sel"' : ''}><td></td><td><button type="button" class="plus" aria-label="展开"></button></td>
  <td class="code">CGRK-2015${no}</td><td class="text">${supplier}</td><td class="code">2015-${date}</td>
  <td>${by}</td><td class="code">2015-${time}</td><td></td><td></td><td class="text">${memo}</td></tr>`).join('');

// Privacy mosaic: one line per 20px band, columns from x = 380, colours as grey levels.
const bands = [
  'dcdcd8 d2d2ce cccecc d2d2cc d4d4ca', 'e4e4e4 d6d6d4 cdcecf d2d2d0 d8d8d2', 'e6e6e6 d9d9d9 cfd0d1 d4d4d4 d8d8d8',
  'e6e6e6 dadada d0d1d3 d4d4d6 d8d8d8', 'e6e6e6 dadada d6d6d8 dadadc dcdcdc', 'dcdcde dedee0 d4d7da f2f2f2 f2f2f2',
  'e6e6e8 dadadc cfd3d7 dedfe1 dedfe1', 'e8e8ea dcdcde d0d3d6 d8d9da d8d9da', 'e6e6e8 d9d8d8 cfd0d2 d6d6d6 d6d6d6',
  'e6e6e8 d6d5d3 cecfcf d2d3d3 d2d3d3', 'e4e4e6 d6d4d2 d2d1cf d8d8d8 d8d8d8', 'e4e4e6 d8d7d5 cacaca d8d8d8 d8d8d8',
  'e2e0e0 d6d5d3 d8d8d6 dadad8 dadad8', 'dededf e4e4e6 fafafa fbfbfb fbfbfb', 'dcdddf e2e2e3 fafafa fbfbfb fbfbfb',
  'd9dadc cac8c8 d4d5d9 fafafa fafafa', 'd9dadc ceccca d8dadc fafafa fafafa', 'dededf cbc9c9 d2d4d6 c9c7c9 c9c7c9',
  'd8dadc d2d0ce d6d8da fafafa fafafa', 'd8dadc dad8d6 d0d3d5 fafafa fafafa', 'd8dadc c8c6c5 d3d5d6 fafafa fafafa',
  'd8dadc cbcccd c8c9ca cbcccd cbcccd', 'd8dadc c8c6c5 dededf fafafa fafafa', 'd8dadc dadadc ced0d2 fafafa fafafa',
  'd8dadc d6d4d3 d8dadc fafafa fafafa', 'd8dadc d9d9d8 dadcdc fafafa fafafa', 'd8dadc d5d4d3 d8dadc d8dadc fafafa',
  'd8dadc d5d4d3 d8dadc d8dadc fafafa', 'd9dbdc dadadb dadbdd dadbdd fafafa', 'd9dbdc d8d7d4 d6d7d8 d6d7d8 fafafa',
  'bfbfb7 c0c1b8 bdbfb6 bdbfb6 fafafa', 'c2c3ba bdbeb5 b5b7ae b5b7ae fafafa', 'dedede dcdcdc d4d6d8 d4d6d8 fafafa',
  'dcdcdd d5d3d2 d5d7d9 d5d7d9 fafafa', 'dcdcdd d5d3d2 d5d7d9 d5d7d9 fafafa', 'dededf dadadb d5d7d9 d5d7d9 fafafa',
  'dededf d6d4d4 d8d8d8 d8d8d8 fafafa', 'dededf d6d4d4 d8d8d8 d8d8d8 fafafa'
];
document.getElementById('blocks').innerHTML = bands.map((band, y) =>
  band.split(' ').map((c, x) => `<rect x="${380 + x * 20}" y="${220 + y * 20}" width="20" height="20" fill="#${c}"/>`).join('')).join('');
```
